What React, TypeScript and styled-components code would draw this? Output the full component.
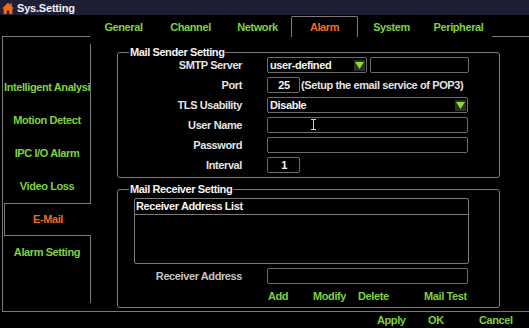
import styled, { createGlobalStyle } from "styled-components";

const GREEN = "#7fd23c";
const ORANGE = "#f26a1b";
const LINE = "#7a7a7a";
const FIELD = "#6c6c6c";

const GlobalStyle = createGlobalStyle`
  html, body {
    margin: 0;
    padding: 0;
    background: #000;
  }
  body {
    font-family: "Liberation Sans", Arial, sans-serif;
  }
`;

const Screen = styled.div`
  width: 529px;
  height: 328px;
  background: #000;
  overflow: hidden;
  display: flex;
  flex-direction: column;
  font-family: "Liberation Sans", Arial, sans-serif;
  font-weight: 700;
  font-size: 11px;
  letter-spacing: -0.4px;
  color: #e4e4e4;
`;

const TitleBar = styled.div`
  height: 15px;
  flex: none;
  background: #1e1f35;
  display: flex;
  align-items: center;
  gap: 3px;
  padding-left: 2px;
  color: #f2f2f2;
  font-size: 11px;
  letter-spacing: -0.2px;
`;

const TabBar = styled.div`
  position: relative;
  z-index: 1;
  flex: none;
  display: flex;
  height: 21px;
  margin: 1px 0 -1px;
  padding-left: 90px;
`;

const Tab = styled.div<{ $active?: boolean }>`
  width: 67px;
  height: 21px;
  box-sizing: border-box;
  display: flex;
  align-items: center;
  justify-content: center;
  color: ${({ $active }) => ($active ? ORANGE : GREEN)};
  background: #000;
  border: 1px solid ${({ $active }) => ($active ? LINE : "transparent")};
  border-bottom: none;
  border-radius: 2px 2px 0 0;
`;

const Panel = styled.div`
  flex: none;
  height: 276px;
  box-sizing: border-box;
  margin-left: 2px;
  border: 1px solid ${LINE};
  border-right: none;
  display: flex;
`;

const Menu = styled.div`
  flex: none;
  width: 87px;
  margin: 7px 0 0 1px;
  display: flex;
  flex-direction: column;
`;

const MenuGap = styled.div<{ $h: number }>`
  height: ${({ $h }) => $h}px;
  border-right: 1px solid ${LINE};
`;

const MenuItem = styled.div<{ $active?: boolean }>`
  height: 33px;
  box-sizing: border-box;
  line-height: ${({ $active }) => ($active ? 31 : 33)}px;
  text-align: center;
  white-space: nowrap;
  overflow: hidden;
  color: ${({ $active }) => ($active ? ORANGE : GREEN)};
  border: ${({ $active }) => ($active ? `1px solid ${LINE}` : "none")};
  border-right: ${({ $active }) => ($active ? "none" : `1px solid ${LINE}`)};
`;

const Content = styled.div`
  display: flex;
  flex-direction: column;
  padding: 15px 0 0 26px;
`;

const GroupBox = styled.div<{ $mt?: number }>`
  position: relative;
  width: 383px;
  box-sizing: border-box;
  margin-top: ${({ $mt }) => $mt ?? 0}px;
  padding: 2px 0;
  border: 1px solid ${LINE};
  border-radius: 3px;
`;

const Legend = styled.div`
  position: absolute;
  top: -7px;
  left: 11px;
  padding: 0 1px;
  line-height: 13px;
  background: #000;
  color: #f4f4f4;
`;

const Row = styled.div<{ $mt?: number }>`
  display: flex;
  align-items: center;
  height: 20px;
  margin-top: ${({ $mt }) => $mt ?? 0}px;
`;

const Label = styled.div<{ $dim?: boolean }>`
  flex: none;
  width: 124px;
  margin-right: 25px;
  text-align: right;
  color: ${({ $dim }) => ($dim ? "#c4c4c4" : "#e4e4e4")};
`;

const Field = styled.div<{ $w: number; $center?: boolean; $ml?: number }>`
  position: relative;
  flex: none;
  width: ${({ $w }) => $w}px;
  height: 16px;
  box-sizing: border-box;
  margin-left: ${({ $ml }) => $ml ?? 0}px;
  padding: 0 1px 0 2px;
  display: flex;
  align-items: center;
  justify-content: ${({ $center }) => ($center ? "center" : "flex-start")};
  border: 1px solid ${FIELD};
  border-radius: 2px;
  color: #f4f4f4;
  white-space: nowrap;
`;

const ArrowBox = styled.div`
  width: 11px;
  height: 11px;
  margin-left: auto;
  background: #2c2c2c;
  display: flex;
  align-items: center;
  justify-content: center;
`;

const Hint = styled.div`
  margin-left: 1px;
  white-space: nowrap;
  color: #e4e4e4;
`;

const Cursor = styled.svg`
  position: absolute;
  left: 43px;
  top: 1px;
`;

const ListBox = styled.div`
  width: 335px;
  height: 66px;
  box-sizing: border-box;
  margin: 6px 0 0 16px;
  border: 1px solid ${LINE};
  border-radius: 2px;
`;

const ListHeader = styled.div`
  height: 15px;
  line-height: 15px;
  padding-left: 1px;
  border-bottom: 1px solid ${LINE};
  color: #f4f4f4;
`;

const ButtonRow = styled.div`
  display: flex;
  align-items: center;
  height: 19px;
  padding-left: 149px;
`;

const ActionButton = styled.div<{ $w?: number; $ml?: number }>`
  flex: none;
  width: ${({ $w }) => ($w ? `${$w}px` : "auto")};
  margin-left: ${({ $ml }) => $ml ?? 0}px;
  padding-left: 1px;
  box-sizing: border-box;
  overflow: hidden;
  white-space: nowrap;
  color: ${GREEN};
`;

const Footer = styled.div`
  flex: 1;
  display: flex;
  align-items: center;
  justify-content: flex-end;
`;

const FooterButton = styled.div`
  width: 51px;
  padding-left: 1px;
  box-sizing: border-box;
  color: ${GREEN};
`;

const HomeIcon = () => (
  <svg width="12" height="12" viewBox="0 0 12 12">
    <path
      d="M6 0.8 L0 6.4 H1.6 V12 H4.8 V8.4 H7.2 V12 H10.4 V6.4 H12 L9.8 4.3 V1.2 H8.4 V3 Z"
      fill="#f46a12"
    />
  </svg>
);

const DropArrow = () => (
  <ArrowBox>
    <svg width="9" height="7" viewBox="0 0 9 7">
      <path d="M0 0 H9 L4.5 7 Z" fill="#84e02a" />
    </svg>
  </ArrowBox>
);

const tabs = ["General", "Channel", "Network", "Alarm", "System", "Peripheral"];
const menu = ["Intelligent Analysis", "Motion Detect", "IPC I/O Alarm", "Video Loss", "E-Mail", "Alarm Setting"];

export default function App() {
  return (
    <Screen>
      <GlobalStyle />
      <TitleBar>
        <HomeIcon />
        <span>Sys.Setting</span>
      </TitleBar>
      <TabBar>
        {tabs.map((t) => (
          <Tab key={t} $active={t === "Alarm"}>
            {t}
          </Tab>
        ))}
      </TabBar>
      <Panel>
        <Menu>
          <MenuGap $h={27} />
          {menu.map((m) => (
            <MenuItem key={m} $active={m === "E-Mail"}>
              {m}
            </MenuItem>
          ))}
          <MenuGap $h={34} />
        </Menu>
        <Content>
          <GroupBox>
            <Legend>Mail Sender Setting</Legend>
            <Row>
              <Label>SMTP Server</Label>
              <Field $w={100}>
                user-defined
                <DropArrow />
              </Field>
              <Field $w={99} $ml={3} />
            </Row>
            <Row>
              <Label>Port</Label>
              <Field $w={33} $center>
                25
              </Field>
              <Hint>(Setup the email service of POP3)</Hint>
            </Row>
            <Row>
              <Label>TLS Usability</Label>
              <Field $w={201}>
                Disable
                <DropArrow />
              </Field>
            </Row>
            <Row>
              <Label>User Name</Label>
              <Field $w={201}>
                <Cursor width="5" height="11" viewBox="0 0 5 11">
                  <path d="M0 0.5 H5 M2.5 0.5 V10.5 M0 10.5 H5" stroke="#cfcfcf" strokeWidth="1" fill="none" />
                </Cursor>
              </Field>
            </Row>
            <Row>
              <Label>Password</Label>
              <Field $w={201} />
            </Row>
            <Row>
              <Label>Interval</Label>
              <Field $w={33} $center>
                1
              </Field>
            </Row>
          </GroupBox>
          <GroupBox $mt={11}>
            <Legend>Mail Receiver Setting</Legend>
            <ListBox>
              <ListHeader>Receiver Address List</ListHeader>
            </ListBox>
            <Row $mt={2}>
              <Label $dim>Receiver Address</Label>
              <Field $w={201} />
            </Row>
            <ButtonRow>
              <ActionButton $w={35}>Add</ActionButton>
              <ActionButton $w={34} $ml={10}>
                Modify
              </ActionButton>
              <ActionButton $w={35} $ml={11}>
                Delete
              </ActionButton>
              <ActionButton $ml={31}>Mail Test</ActionButton>
            </ButtonRow>
          </GroupBox>
        </Content>
      </Panel>
      <Footer>
        <FooterButton>Apply</FooterButton>
        <FooterButton>OK</FooterButton>
        <FooterButton>Cancel</FooterButton>
      </Footer>
    </Screen>
  );
}
